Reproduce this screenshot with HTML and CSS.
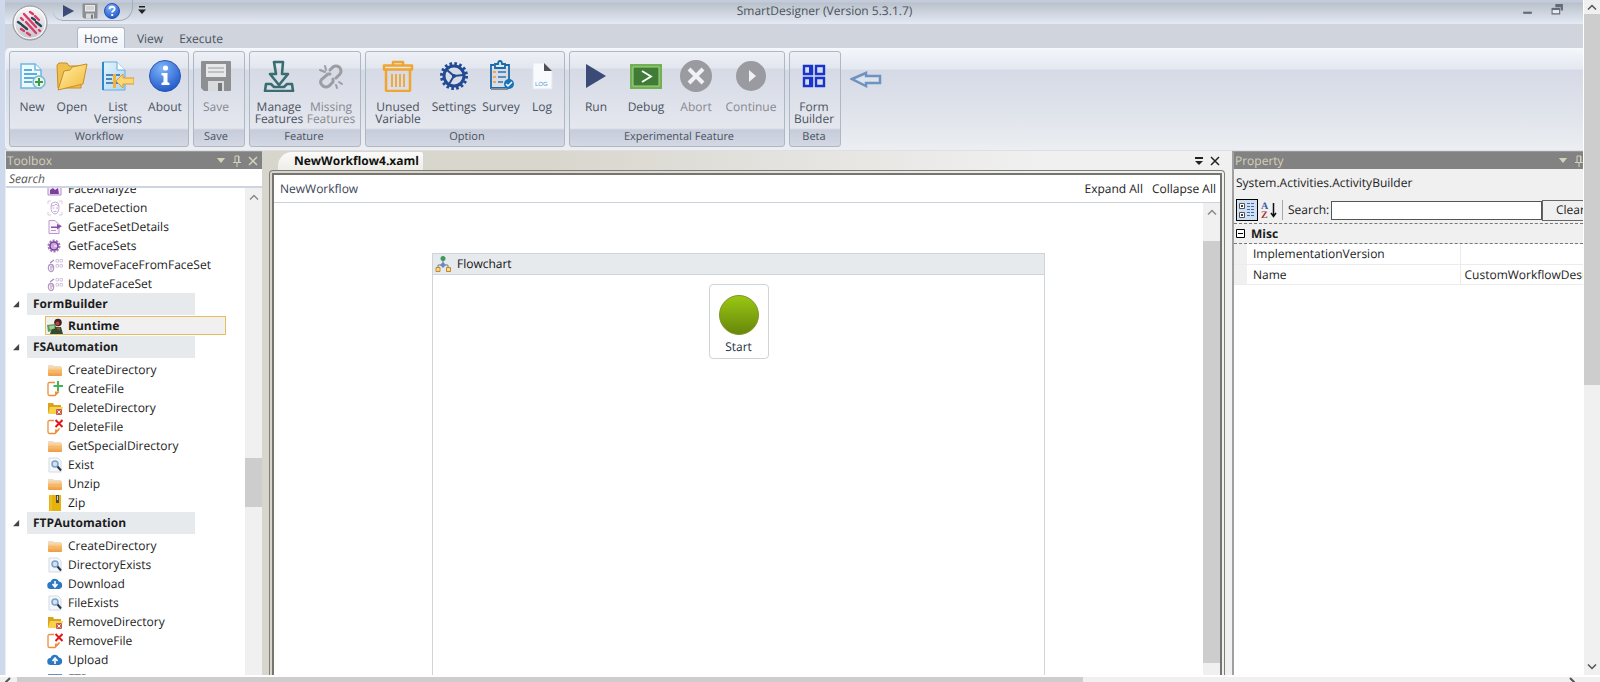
FILE: index.html
```html
<!DOCTYPE html>
<html lang="en">
<head>
<meta charset="utf-8">
<title>SmartDesigner (Version 5.3.1.7)</title>
<link rel="stylesheet" href="styles.css">
</head>
<body>
<svg class="defs" aria-hidden="true">
  <defs>
    <linearGradient id="gFold" x1="0" y1="0" x2="0" y2="1"><stop offset="0" stop-color="#fbd9a4"/><stop offset="1" stop-color="#ef9a3c"/></linearGradient>
    <linearGradient id="gYel" x1="0" y1="0" x2="1" y2="1"><stop offset="0" stop-color="#fff0a8"/><stop offset="1" stop-color="#f3b93a"/></linearGradient>
    <radialGradient id="gBlue" cx=".4" cy=".25" r=".8"><stop offset="0" stop-color="#7db4f8"/><stop offset="1" stop-color="#1f55c8"/></radialGradient>
    <linearGradient id="gGreen" x1="0" y1="0" x2="0" y2="1"><stop offset="0" stop-color="#9ac813"/><stop offset="1" stop-color="#66860a"/></linearGradient>
    <linearGradient id="gOrb" x1="0" y1="0" x2="0" y2="1"><stop offset="0" stop-color="#fafafa"/><stop offset="1" stop-color="#c3c5ca"/></linearGradient>
    <linearGradient id="gDoc" x1="0" y1="0" x2="1" y2="1"><stop offset="0" stop-color="#e6f5fd"/><stop offset="1" stop-color="#a9d5f2"/></linearGradient>
  </defs>
  <symbol id="folder" viewBox="0 0 16 16"><path d="M1 3h5l1 1h7v3H1z" fill="#e9ddd0"/><path d="M1 5h14v8q0 1-1 1H2q-1 0-1-1z" fill="url(#gFold)"/><path d="M1 8.500h14" stroke="#f6b768"/></symbol>
  <symbol id="folderdel" viewBox="0 0 16 16"><path d="M1 3h5l1 2h7v8H1z" fill="#d9a31c"/><path d="M3 7h13l-2 7H1z" fill="#f7d24c"/><rect x="9" y="9" width="6" height="6" rx="1" fill="#c95a48"/><path d="M10.500 10.500l3 3m0-3l-3 3" stroke="#fff"/></symbol>
  <symbol id="filenew" viewBox="0 0 16 16"><path d="M8 1.500H2.500Q1 1.500 1 3v10q0 1.500 1.500 1.500H8l4-4" fill="#fff" stroke="#ee8d3a" stroke-width="1.300"/><path d="M8 14.500v-4h4z" fill="#ee8d3a"/><path d="M11 0v10M6.500 5h9.500" stroke="#45b35a" stroke-width="2"/></symbol>
  <symbol id="filedel" viewBox="0 0 16 16"><path d="M7 1.500H2.500Q1 1.500 1 3v10q0 1.500 1.500 1.500H8l4-4V9" fill="#fff" stroke="#ee8d3a" stroke-width="1.300"/><path d="M8 14.500v-4h4z" fill="#ee8d3a"/><path d="M8.500 1l7 7m0-7l-7 7" stroke="#e0161c" stroke-width="2"/></symbol>
  <symbol id="find" viewBox="0 0 16 16"><path d="M2 1h9l3 3v11H2z" fill="#f4f7fa" stroke="#d3dbe4"/><circle cx="8" cy="7" r="3" fill="#cfe3f7" stroke="#7f9fc6" stroke-width="1.500"/><path d="M10.500 9.500l3.500 4" stroke="#26384f" stroke-width="2"/></symbol>
  <symbol id="zip" viewBox="0 0 16 16"><path d="M2 0h12v16H2z" fill="#e8b20e"/><path d="M9 0h3v8H9z" fill="#4c4a42"/><path d="M10 1h1v4h-1z" fill="#d8d8d8"/><path d="M4 0v16" stroke="#f3c93e"/></symbol>
  <symbol id="cloud" viewBox="0 0 16 16"><path d="M4 13a3.500 3.500 0 0 1-.5-7A4.500 4.500 0 0 1 12 5.500 3.800 3.800 0 0 1 12 13z" fill="#2d78c4"/></symbol>
  <symbol id="down" viewBox="0 0 16 16"><use href="#cloud"/><path d="M8 5v5M5.500 8L8 11l2.500-3" fill="none" stroke="#fff" stroke-width="1.600"/></symbol>
  <symbol id="up" viewBox="0 0 16 16"><use href="#cloud"/><path d="M8 12V7M5.500 9L8 6l2.500 3" fill="none" stroke="#fff" stroke-width="1.600"/></symbol>
  <symbol id="ftp" viewBox="0 0 16 16"><path d="M1 3h14v12H1z" fill="#6c90bd"/><path d="M1 4h14v2H1z" fill="#3f6595"/></symbol>
  <symbol id="faceA" viewBox="0 0 16 16"><path d="M1 14V2h9l4 4v8z" fill="#f3e9f7" stroke="#b18cc4"/><path d="M3 13V9l3-2 2 2 3-2 1 6z" fill="#7c3f9c"/></symbol>
  <symbol id="faceD" viewBox="0 0 16 16"><path d="M1 4V1h3M12 1h3v3M15 12v3h-3M4 15H1v-3" fill="none" stroke="#dccbe4"/><path d="M4 6q0-4 4-4t4 4q0 8-4 8T4 6zM4 6q4 0 5-2 1 2 3 2M5.500 8h2M9 8h2M6.500 11.500h3" fill="none" stroke="#c6abd4"/></symbol>
  <symbol id="faceG" viewBox="0 0 16 16"><path d="M2 1.500h6l4 4v9H2z" fill="#f9f4fb" stroke="#b79ac6"/><path d="M4 7.500h6V5l5 2-5 3.500V9H4z" fill="#8b4fae"/><path d="M4 11.500h5" stroke="#b79ac6"/></symbol>
  <symbol id="faceS" viewBox="0 0 16 16"><circle cx="7" cy="8" r="5.500" fill="none" stroke="#a57cbb" stroke-width="2" stroke-dasharray="2.200 1.200"/><circle cx="7" cy="8" r="4" fill="#c9a9d9" stroke="#7b3f9c" stroke-width="1.600"/><path d="M10 8H7" stroke="#fff"/></symbol>
  <symbol id="faceR" viewBox="0 0 16 16"><ellipse cx="4" cy="11" rx="2.600" ry="3.500" fill="none" stroke="#b497c4" stroke-width="1.300"/><path d="M3 6l4-3M3 10h3M3 12h2" stroke="#a785b8" stroke-width="1.200"/><path d="M9 2.500h2.500V5H9zM13 2.500h2.500V5H13zM9 7.500h2.500V10H9zM13 7.500h2.500V10H13z" fill="none" stroke="#d6c5e0"/></symbol>
  <symbol id="runtime" viewBox="0 0 16 16"><circle cx="11" cy="4.500" r="3.800" fill="#3c2326"/><circle cx="10.500" cy="5.500" r="2" fill="#c24036"/><path d="M0 7l8-1 2 5-9 3z" fill="#5e9a5c"/><path d="M7 9h7l2 7H3l1-3z" fill="#2f4c2c"/><path d="M2 8l5-.5 1 3-5 1z" fill="#a5cf8f"/><path d="M9 10l4-1v4z" fill="#96513c"/></symbol>
  <symbol id="floppy" viewBox="0 0 32 32"><path d="M1 2q0-1 1-1h28q1 0 1 1v28q0 1-1 1H4l-3-3z" fill="#8d8f93"/><path d="M6 4h20v13H6z" fill="#e7e8ea"/><path d="M8 8h16M8 12h16" stroke="#bfc1c4" stroke-width="2"/><path d="M8 21h16v10H8z" fill="#d8dadc"/><path d="M18 23h4v8h-4z" fill="#77797d"/></symbol>
  <symbol id="chevup" viewBox="0 0 10 6"><path d="M1 5.500L5 1.500l4 4" fill="none" stroke="currentColor" stroke-width="1.500"/></symbol>
  <symbol id="pin" viewBox="0 0 10 12"><path d="M3 7V1h4v6M1 7.500h8M5 8v4M6.500 1v6" fill="none" stroke="currentColor"/></symbol>
  <symbol id="cross" viewBox="0 0 10 10"><path d="M1 1l8 8M9 1L1 9" stroke="currentColor" stroke-width="1.500"/></symbol>
  <symbol id="drop" viewBox="0 0 10 6"><path d="M0 0h10L5 6z" fill="currentColor"/></symbol>
</svg>

<div class="viewport">
<div class="app">
  <header class="titlebar">
    <button class="orb" aria-label="Application menu"><svg viewBox="0 0 36 36"><circle cx="18" cy="18" r="17" fill="url(#gOrb)" stroke="#8f929a"/><circle cx="18" cy="18" r="15.500" fill="none" stroke="#fff"/><g stroke-width="2.400" stroke-linecap="round"><path d="M18 7l3 2M23 11l4 4M12 9l12 13M9 13l2 2M14 17l10 11M27 25l1 1M9 24l3 2M15 28l3 2" stroke="#d93a68"/><path d="M20 13l3 2M24 17l5 4M6 17l3 2M10 20l5 4" stroke="#2a4658"/></g></svg></button>
    <div class="qat">
      <button aria-label="Run"><svg viewBox="0 0 16 16"><path d="M3 2l11 6-11 6z" fill="#3b4a76"/></svg></button>
      <button aria-label="Save"><svg viewBox="0 0 32 32"><use href="#floppy"/></svg></button>
      <button aria-label="Help"><svg viewBox="0 0 16 16"><circle cx="8" cy="8" r="7.500" fill="url(#gBlue)" stroke="#2451b5"/><path d="M5.500 6.300q0-2.500 2.600-2.500t2.500 2.200q0 1.200-1.500 2-.9.500-.9 1.600M8.200 11v2" fill="none" stroke="#fff" stroke-width="1.900"/></svg></button>
    </div>
    <button class="more" aria-label="Customize"><svg viewBox="0 0 8 8"><path d="M1 0h6v1.500H1zM0 3.500h8L4 8z" fill="#222"/></svg></button>
    <h1>SmartDesigner (Version 5.3.1.7)</h1>
    <div class="winbtns">
      <button aria-label="Minimize"><svg viewBox="0 0 12 12"><path d="M2 8h8v2H2z" fill="#636b7a"/></svg></button>
      <button aria-label="Restore"><svg viewBox="0 0 12 12"><path d="M4 1h7v6H9V4H4z" fill="#636b7a"/><path d="M1 5h7v5H1z" fill="#e8ecf2" stroke="#636b7a"/><path d="M1 4.500h7v2H1z" fill="#636b7a"/></svg></button>
    </div>
  </header>
  <nav class="tabs">
    <button class="on">Home</button><button>View</button><button>Execute</button>
  </nav>

  <section class="ribbon">
    <div class="group"><div class="items">
      <button class="w40"><svg viewBox="0 0 32 32"><path d="M5 4h14l6 6v18H5z" fill="#eef8fd" stroke="#6db7e3" stroke-width="1.500"/><path d="M19 4v6h6" fill="#fff" stroke="#6db7e3" stroke-width="1.500"/><path d="M8 10h8M8 14h13M8 18h10M8 22h8" stroke="#5aaede" stroke-width="2"/><circle cx="23" cy="22" r="6" fill="#e6f4ea" stroke="#74b7d8" stroke-width="1.500"/><path d="M23 18v8M19 22h8" stroke="#3c9a4b" stroke-width="2"/></svg><span>New</span></button>
      <button class="w40"><svg viewBox="0 0 32 32"><path d="M1 5l2-2h8l2 3h12v22H2z" fill="#f0c04e" stroke="#c98d24"/><path d="M2 30L8 11l6-1 2-3 15-3-4 20z" fill="url(#gYel)" stroke="#c98d24"/></svg><span>Open</span></button>
      <button class="w52"><svg viewBox="0 0 32 32"><path d="M1 2h14l8 8v20H1z" fill="url(#gDoc)" stroke="#68addb"/><path d="M15 2v8h8" fill="#fff" stroke="#68addb"/><path d="M4 15h14M4 19h6M4 23h14" stroke="#4d86ba" stroke-width="2"/><path d="M1 2v28" stroke="#2f88c7" stroke-width="2"/><path d="M11 14h3v14h-3z" fill="#f1b33d"/><path d="M14 21l7-7v4h11v6H21v4z" fill="#fbd778" stroke="#dc9a2a"/></svg><span>List<br>Versions</span></button>
      <button class="w42"><svg viewBox="0 0 32 32"><circle cx="16" cy="16" r="15.500" fill="url(#gBlue)" stroke="#2c57b0"/><circle cx="16.500" cy="8" r="2.600" fill="#fff"/><path d="M12.500 13h6v9l2 1v2h-8v-2l2-1v-6l-2-1z" fill="#fff"/></svg><span>About</span></button>
    </div><h2>Workflow</h2></div>
    <div class="group short"><div class="items">
      <button class="w42 off"><svg viewBox="0 0 32 32"><use href="#floppy"/></svg><span>Save</span></button>
    </div><h2>Save</h2></div>
    <div class="group feature"><div class="items">
      <button class="w54"><svg viewBox="0 0 32 32"><path d="M11 2h9l-1 12h6l-9 11-9-11h6zM3 24l-1 7h28l-1-7h-5l-3 3H11l-3-3z" fill="none" stroke="#3a6d72" stroke-width="2.600" stroke-linejoin="round"/></svg><span>Manage<br>Features</span></button>
      <button class="w50 off"><svg viewBox="0 0 32 32"><g fill="none" stroke="#9b9da3" stroke-width="3" stroke-linecap="round"><path d="M15 10l3-3q3-2 6 0l1 1q2 3 0 6l-4 4M13 14l-6 5q-3 3 0 6l1 1q3 2 6 0l4-4M13 14l2 0M18 22v-3"/><path d="M10 6l1 4M5 10l5 2M24 22l3 2M21 25l1 3" stroke-width="2"/></g></svg><span>Missing<br>Features</span></button>
    </div><h2>Feature</h2></div>
    <div class="group wide"><div class="items">
      <button class="w56"><svg viewBox="0 0 32 32"><g fill="none" stroke="#efa52e" stroke-width="2.500" stroke-linejoin="round"><path d="M2 5.500h28v4H2zM11 5V2h10v3M4 10v20q0 1 1 1h22q1 0 1-1V10"/><path d="M10 14v13M14 14v13M18 14v13M22 14v13" stroke-width="1.800"/></g></svg><span>Unused<br>Variable</span></button>
      <button class="w56"><svg viewBox="0 0 32 32"><circle cx="16" cy="16" r="12.500" fill="none" stroke="#214a94" stroke-width="3" stroke-dasharray="2.600 2.310"/><circle cx="16" cy="16" r="10" fill="none" stroke="#214a94" stroke-width="3"/><path d="M16 16L9 10M16 16l9-1M16 16l-5 8" stroke="#214a94" stroke-width="2"/><circle cx="16" cy="16" r="2" fill="#214a94"/></svg><span>Settings</span></button>
      <button class="w38"><svg viewBox="0 0 32 32"><path d="M9 5H6v23h18" fill="none" stroke="#1b6ba8" stroke-width="1.800"/><path d="M20 5h4v15" fill="none" stroke="#1b6ba8" stroke-width="1.800"/><path d="M10 4h3q0-3 2-3t2 3h3v4H10z" fill="#dbe9f5" stroke="#1b6ba8" stroke-width="1.800"/><path d="M8 12h3M8 17h3M8 22h3" stroke="#f0a94e" stroke-width="2"/><path d="M13 12h8M13 17h8M13 22h5" stroke="#2a75ae" stroke-width="1.600"/><path d="M6 29h17" stroke="#7f8b99" stroke-width="2"/><circle cx="24" cy="24" r="5" fill="#1573b8"/><path d="M21 24l2 2 4-4" fill="none" stroke="#fff" stroke-width="1.500"/></svg><span>Survey</span></button>
      <button class="w44"><svg viewBox="0 0 32 32"><path d="M7 3h11l8 8v18H7z" fill="#f8fafd" stroke="#e3e8f0"/><path d="M18 3l8 8h-8z" fill="#4e5055"/><text x="9" y="26" class="log">LOG</text></svg><span>Log</span></button>
    </div><h2>Option</h2></div>
    <div class="group wide"><div class="items">
      <button class="w44"><svg viewBox="0 0 32 32"><path d="M6 4l20 12L6 28z" fill="#3b4a76"/></svg><span>Run</span></button>
      <button class="w56"><svg viewBox="0 0 32 32"><path d="M0 4h32v25H0z" fill="#73b053"/><path d="M3 7h26v19H3z" fill="#3f7c36" stroke="#a5d48a"/><path d="M12 11l9 5.500-9 5.500" fill="none" stroke="#fff" stroke-width="1.800"/></svg><span>Debug</span></button>
      <button class="w44 off"><svg viewBox="0 0 32 32"><circle cx="16" cy="16" r="16" fill="#999ba0"/><path d="M9 9l14 14M23 9L9 23" stroke="#f0f1f4" stroke-width="4"/></svg><span>Abort</span></button>
      <button class="w66 off"><svg viewBox="0 0 32 32"><circle cx="16" cy="16" r="15" fill="#999ba0"/><path d="M14 10l7 6-7 6z" fill="#f0f1f4"/></svg><span>Continue</span></button>
    </div><h2>Experimental Feature</h2></div>
    <div class="group beta"><div class="items">
      <button class="w48"><svg viewBox="0 0 32 32"><g fill="none" stroke="#1734cf" stroke-width="2.400"><path d="M6 6h8v8H6zM18 6h8v8h-8zM6 18h8v8H6zM18 18h8v8h-8z"/><path d="M12 6v8M12 18v8" stroke-width="2"/></g></svg><span>Form<br>Builder</span></button>
    </div><h2>Beta</h2></div>
    <button class="back" aria-label="Collapse ribbon"><svg viewBox="0 0 32 18"><path d="M2 9l14-6v3h14v7H16v3z" fill="#dde4ef" stroke="#6e93bf" stroke-width="2.500"/></svg></button>
  </section>

  <main class="work">
    <aside class="toolbox">
      <div class="panehead"><h2>Toolbox</h2><button aria-label="Menu"><svg class="dr" viewBox="0 0 10 6"><use href="#drop"/></svg></button><button aria-label="Pin"><svg class="pn" viewBox="0 0 10 12"><use href="#pin"/></svg></button><button aria-label="Close"><svg viewBox="0 0 10 10"><use href="#cross"/></svg></button></div>
      <input class="find" type="text" placeholder="Search" aria-label="Search toolbox">
      <div class="treebox">
        <div class="tree">
          <ul>
            <li><svg><use href="#faceA"/></svg>FaceAnalyze</li>
            <li><svg><use href="#faceD"/></svg>FaceDetection</li>
            <li><svg><use href="#faceG"/></svg>GetFaceSetDetails</li>
            <li><svg><use href="#faceS"/></svg>GetFaceSets</li>
            <li><svg><use href="#faceR"/></svg>RemoveFaceFromFaceSet</li>
            <li><svg><use href="#faceR"/></svg>UpdateFaceSet</li>
          </ul>
          <h3><svg viewBox="0 0 8 8"><path d="M7 0v7H0z"/></svg><span>FormBuilder</span></h3>
          <ul class="chosen"><li><svg><use href="#runtime"/></svg>Runtime</li></ul>
          <h3><svg viewBox="0 0 8 8"><path d="M7 0v7H0z"/></svg><span>FSAutomation</span></h3>
          <ul class="sub">
            <li><svg><use href="#folder"/></svg>CreateDirectory</li>
            <li><svg><use href="#filenew"/></svg>CreateFile</li>
            <li><svg><use href="#folderdel"/></svg>DeleteDirectory</li>
            <li><svg><use href="#filedel"/></svg>DeleteFile</li>
            <li><svg><use href="#folder"/></svg>GetSpecialDirectory</li>
            <li><svg><use href="#find"/></svg>Exist</li>
            <li><svg><use href="#folder"/></svg>Unzip</li>
            <li><svg><use href="#zip"/></svg>Zip</li>
          </ul>
          <h3><svg viewBox="0 0 8 8"><path d="M7 0v7H0z"/></svg><span>FTPAutomation</span></h3>
          <ul class="sub">
            <li><svg><use href="#folder"/></svg>CreateDirectory</li>
            <li><svg><use href="#find"/></svg>DirectoryExists</li>
            <li><svg><use href="#down"/></svg>Download</li>
            <li><svg><use href="#find"/></svg>FileExists</li>
            <li><svg><use href="#folderdel"/></svg>RemoveDirectory</li>
            <li><svg><use href="#filedel"/></svg>RemoveFile</li>
            <li><svg><use href="#up"/></svg>Upload</li>
            <li><svg><use href="#ftp"/></svg>FTP</li>
          </ul>
        </div>
        <div class="vbar tbar"><svg viewBox="0 0 10 6"><use href="#chevup"/></svg><i></i></div>
      </div>
    </aside>

    <section class="docs">
      <div class="doctabs"><button class="doctab">NewWorkflow4.xaml</button><span class="grow"></span><button class="ic" aria-label="Documents"><svg viewBox="0 0 10 10"><path d="M1 1h8v2H1zM1 5h8L5 9z" fill="#222"/></svg></button><button class="ic" aria-label="Close document"><svg viewBox="0 0 10 10"><use href="#cross"/></svg></button></div>
      <div class="frame"><div class="inner">
        <div class="crumbs"><a href="#root">NewWorkflow</a><span class="grow"></span><button>Expand All</button><button>Collapse All</button></div>
        <div class="surface">
          <div class="canvas">
            <div class="flow">
              <div class="flowhead"><svg viewBox="0 0 16 16"><path d="M8 4v5M3 12V9h10v3" fill="none" stroke="#6b7f99"/><circle cx="8" cy="2.500" r="2.500" fill="#3c9a5c"/><path d="M8 6l3 3-3 3-3-3z" fill="#6e86c4"/><path d="M1 11.500h4v4H1zM11.500 11.500h4v4h-4z" fill="#fbd98a" stroke="#c0882c"/></svg>Flowchart</div>
              <div class="start"><svg viewBox="0 0 40 40"><circle cx="20" cy="20" r="19.500" fill="url(#gGreen)" stroke="#7f9626"/></svg>Start</div>
            </div>
          </div>
          <div class="vbar dbar"><svg viewBox="0 0 10 6"><use href="#chevup"/></svg><i></i></div>
        </div>
      </div></div>
    </section>

    <aside class="props">
      <div class="panehead"><h2>Property</h2><button aria-label="Menu"><svg class="dr" viewBox="0 0 10 6"><use href="#drop"/></svg></button><button aria-label="Pin" class="edge"><svg class="pn" viewBox="0 0 10 12"><use href="#pin"/></svg></button></div>
      <p class="type">System.Activities.ActivityBuilder</p>
      <div class="ptools">
        <button class="cat" aria-label="Categorized"><svg viewBox="0 0 20 20"><path d="M2.500 3.500h5v5h-5zM2.500 12.500h5v5h-5z" fill="#fff" stroke="#555"/><path d="M4 6h2M5 5v2M4 15h2M5 14v2" stroke="#000"/><path d="M10 3.500h8M10 6.500h8M10 9.500h8M10 12.500h8M10 15.500h8" stroke="#4467a8" stroke-dasharray="3 1"/></svg></button>
        <button class="az" aria-label="Alphabetical"><svg viewBox="0 0 16 18"><text x="0" y="8" fill="#3a55a5">A</text><text x="0" y="17" fill="#a33a35">Z</text><path d="M12.500 2v13M10 12l2.500 3.500L15 12" fill="none" stroke="#111" stroke-width="1.500"/></svg></button>
        <label for="psearch">Search:</label><input id="psearch" type="text"><button class="clear">Clear</button>
      </div>
      <div class="misc"><svg viewBox="0 0 9 9"><path d="M.5.5h8v8h-8z" fill="#fff" stroke="#000"/><path d="M2 4.500h5" stroke="#000"/></svg>Misc</div>
      <table><tbody>
        <tr><td class="gut"></td><th scope="row">ImplementationVersion</th><td></td></tr>
        <tr><td class="gut"></td><th scope="row">Name</th><td>CustomWorkflowDesigner</td></tr>
      </tbody></table>
    </aside>
  </main>
</div>
<div class="vbar page"><svg viewBox="0 0 10 6"><use href="#chevup"/></svg><i></i><span class="grow"></span><svg class="flip" viewBox="0 0 10 6"><use href="#chevup"/></svg></div>
<div class="hbar"><svg viewBox="0 0 6 10"><path d="M5 1L1 5l4 4" fill="none" stroke="#555" stroke-width="2"/></svg><i></i><svg class="end" viewBox="0 0 6 10"><path d="M1 1l4 4-4 4" fill="none" stroke="#555" stroke-width="2"/></svg></div>
</div>
</body>
</html>
```
FILE: styles.css
```css
* { box-sizing: border-box; }
body, h1, h2, h3, p, ul { margin: 0; padding: 0; }
ul { list-style: none; }
body { font: 12px/16px "Open Sans", "Noto Sans", sans-serif; color: #1c1c1c; overflow: hidden; text-rendering: geometricPrecision; }
button { font: inherit; color: inherit; background: none; border: 0; padding: 0; margin: 0; }
button, input { outline: 0; text-rendering: inherit; }
svg { display: block; flex: none; }
h1, h2, h3 { font-size: 12px; font-weight: 400; }
.defs { position: absolute; width: 0; height: 0; }
.grow { flex: 1; }

.viewport { height: 100vh; display: grid; grid-template: minmax(0, 1fr) 7px / minmax(0, 1fr) 17px; background: #f0f0f0; }
.app { display: flex; flex-direction: column; padding-left: 5px; background: #cfd9ec; overflow: hidden; }

.titlebar { display: flex; height: 24px; flex: none; background: linear-gradient(#c3cbdd 0 2px, #b9c1cb 3px, #ccd3dc 12px, #e5eaf4); position: relative; }
.orb { width: 36px; height: 36px; margin: 5px 0 0 7px; z-index: 2; }
.orb svg { width: 36px; height: 36px; }
.qat { display: flex; gap: 6px; height: 21px; width: 80px; margin-left: 5px; padding: 2px 0 0 7px; border-right: 1px solid #a3adbb; border-bottom: 1px solid #a3adbb; border-radius: 0 0 14px 10px; }
.qat svg { width: 16px; height: 16px; }
.more { margin: 6px 0 0 5px; align-self: flex-start; }
.more svg { width: 8px; height: 8px; }
.titlebar h1 { flex: 1; text-align: center; color: #4a5260; line-height: 21px; padding-right: 18px; }
.winbtns { display: flex; gap: 17px; padding: 3px 19px 0 0; align-items: flex-start; }
.winbtns svg { width: 13px; height: 13px; }

.tabs { display: flex; align-items: flex-end; height: 24px; flex: none; padding-left: 72px; background: #cfd4dd; color: #4a5260; }
.tabs button { height: 21px; padding: 2px 8px 0; }
.tabs .on { margin-right: 4px; padding: 1px 6px 0; background: linear-gradient(#fdfdfe, #eff3f8); border: 1px solid #b0b9c8; border-bottom: 0; border-radius: 3px 3px 0 0; }

.ribbon { display: flex; gap: 4px; height: 102px; flex: none; padding: 2px 3px; border-top: 1px solid #f6f8fb; border-left: 1px solid #eef1f6; border-radius: 5px 0 0 5px; background: linear-gradient(#f3f6fa 0, #e4e8f0 20px, #d6dae6 21px, #dee2ea 60px, #eceef2 100%); }
.group { display: flex; flex-direction: column; height: 96px; padding: 0 2px; border: 1px solid #aeb7c4; border-radius: 3px; background: linear-gradient(#edf0f6 0, #e2e6ee 16px, #d6dae5 17px, #e4e7ee 76px, #c6ccda 78px, #d3d8e3 100%); }
.group.wide { padding: 0 0 0 4px; }
.group.short { padding: 0 7px 0 1px; }
.group.feature { padding-right: 4px; }
.group.beta { padding: 0 2px 0 0; }
.items { display: flex; flex: 1; }
.items button { display: flex; flex-direction: column; align-items: center; padding-top: 8px; line-height: 12px; color: #4a5260; }
.items svg { width: 32px; height: 32px; margin-bottom: 9px; }
.items .off { color: #85898f; }
.group h2 { text-align: center; height: 18px; line-height: 18px; color: #4a5260; font-size: 11px; }
.log { font: 6px "Liberation Sans", sans-serif; fill: #5b9bd5; }
.w38 { width: 38px; } .w40 { width: 40px; } .w42 { width: 42px; } .w44 { width: 44px; } .w48 { width: 48px; } .w50 { width: 50px; }
.w52 { width: 52px; } .w54 { width: 54px; } .w56 { width: 56px; } .w66 { width: 66px; }
.back { align-self: flex-start; margin: 19px 0 0 5px; }
.back svg { width: 32px; height: 18px; }

.work { display: flex; flex: 1; min-height: 0; padding-top: 1px; background: #dcdfe4; }
.panehead { display: flex; align-items: center; gap: 6px; height: 18px; flex: none; padding: 0 4px 0 1px; background: #828282; color: #d5d1ba; border-top: 1px solid #9a9a9a; }
.panehead h2 { flex: 1; }
.panehead svg { width: 10px; height: 10px; }
.panehead .dr { height: 5px; }
.panehead .pn { height: 12px; }

.toolbox { display: flex; flex-direction: column; width: 257px; background: #fff; flex: none; border-left: 1px solid #e7ecf5; }
.find { height: 19px; width: 100%; flex: none; border: 0; border-bottom: 2px solid #cdd5e0; padding: 1px 3px 0; font: italic 12px "Open Sans", sans-serif; }
.find::placeholder { color: #555; opacity: 1; }
.treebox { display: flex; flex: 1; min-height: 0; }
.tree { flex: 1; overflow: hidden; }
.tree ul:first-child { margin-top: -9px; }
.tree li { display: flex; align-items: center; gap: 5px; height: 19px; padding-left: 41px; }
.tree li svg { width: 16px; height: 16px; }
.tree h3 { display: flex; align-items: center; height: 22px; font-weight: 700; }
.tree h3 svg { width: 7px; height: 7px; margin: 0 7px; fill: #444; }
.tree h3 span { width: 168px; padding-left: 6px; line-height: 22px; background: #e7eaed; }
.tree .sub { padding-top: 2px; }
.tree .chosen { padding: 1px 0; }
.chosen li { width: 181px; margin-left: 39px; padding-left: 1px; border: 1px solid #e5bd5a; background: #f0f0f0; font-weight: 700; }
.vbar { display: flex; flex-direction: column; align-items: center; width: 17px; flex: none; background: #f0f0f0; color: #8a8a8a; }
.vbar svg { width: 10px; height: 6px; margin-top: 6px; }
.vbar i { width: 100%; background: #cdcdcd; }
.tbar i { height: 49px; margin-top: 258px; }

.docs { display: flex; flex-direction: column; flex: 1; min-width: 0; padding: 0 7px; background: linear-gradient(90deg, #d8d5cc, #d9d6ce 30%, #f0f0f0 80%); }
.doctabs { display: flex; align-items: center; height: 19px; flex: none; padding-right: 5px; }
.doctab { height: 18px; align-self: flex-end; margin-left: 9px; padding: 0 4px 0 16px; font-weight: 700; color: #111; background: linear-gradient(#fbfbf9, #eeede8); border-radius: 14px 2px 0 0; }
.ic { margin-left: 6px; color: #222; }
.ic svg { width: 10px; height: 10px; }
.frame { flex: 1; min-height: 0; padding: 2px 2px 0; border: 1px solid #817e77; border-bottom: 0; border-radius: 4px 4px 0 0; }
.inner { display: flex; flex-direction: column; height: 100%; border: 2px solid #77756f; border-bottom: 0; background: #fff; }
.crumbs { display: flex; align-items: center; gap: 9px; height: 28px; flex: none; padding: 0 4px 0 6px; border-bottom: 1px solid #cdd3da; }
.crumbs a { color: #3a4556; text-decoration: none; }
.surface { display: flex; flex: 1; min-height: 0; }
.canvas { flex: 1; padding-top: 50px; overflow: hidden; }
.flow { width: 66%; height: 100%; margin: 0 auto; border: 1px solid #cdd4da; border-bottom: 0; }
.flowhead { display: flex; align-items: center; gap: 6px; height: 21px; padding-left: 2px; background: #e7eaed; border-bottom: 1px solid #cdd4da; color: #111; }
.flowhead svg { width: 16px; height: 16px; }
.start { display: flex; flex-direction: column; align-items: center; gap: 4px; width: 60px; height: 75px; margin: 9px auto 0; padding-top: 10px; border: 1px solid #cdd4da; border-radius: 4px; color: #26303f; }
.start svg { width: 40px; height: 40px; }
.dbar i { flex: 1; margin: 26px 0 12px; }

.props { display: flex; flex-direction: column; width: 351px; flex: none; background: #fff; border-left: 2px solid #a0a0a0; overflow: hidden; }
.props .panehead { padding-right: 0; }
.edge { width: 9px; overflow: hidden; }
.type { background: #f0f0f0; padding: 6px 2px 6px; }
.ptools { display: flex; align-items: center; height: 26px; flex: none; background: #f0f0f0; padding-left: 2px; }
.cat { width: 22px; height: 22px; border: 1px solid #000; background: #cfe0f5; }
.cat svg { width: 20px; height: 20px; }
.az { margin-left: 3px; }
.az svg { width: 16px; height: 18px; }
.az text { font: 700 10px "Liberation Serif", serif; }
.ptools label { margin-left: 5px; padding-left: 5px; line-height: 20px; border-left: 1px solid #a8a8a8; }
.ptools input { flex: 1; min-width: 0; height: 19px; margin-left: 2px; border: 1px solid #555; background: #fff; font: inherit; }
.clear { width: 41px; height: 21px; flex: none; padding-left: 13px; border: 1px solid #666; border-right: 0; text-align: left; background: #f0f0f0; white-space: nowrap; overflow: hidden; }
.misc { display: flex; align-items: center; gap: 6px; height: 21px; flex: none; padding-left: 2px; background: #f0f0f0; border-top: 1px dashed #777; border-bottom: 1px dashed #777; font-weight: 700; }
.misc svg { width: 9px; height: 9px; }
table { table-layout: fixed; width: 100%; border-collapse: collapse; }
td, th { height: 20px; padding: 2px 4px 1px; font-weight: 400; text-align: left; border-bottom: 1px solid #ececec; white-space: nowrap; overflow: hidden; }
th { width: 213px; border-right: 1px solid #ececec; padding-left: 6px; }
.gut { width: 13px; padding: 0; background: #f0f0f0; }

.page { color: #555; border: solid #fff; border-width: 0 0 0 1px; }
.page svg { margin-top: 4px; }
.page i { height: 55%; margin-top: 4px; }
.page .flip { transform: rotate(180deg); margin-bottom: 5px; }
.hbar { grid-column: 1 / 3; display: flex; border-top: 2px solid #fff; overflow: hidden; background: #f0f0f0; }
.hbar svg { width: 6px; height: 10px; margin: 0 6px 0 5px; }
.hbar i { width: 66.600%; background: #cdcdcd; }
.hbar .end { margin-left: auto; margin-right: 25px; }
```
